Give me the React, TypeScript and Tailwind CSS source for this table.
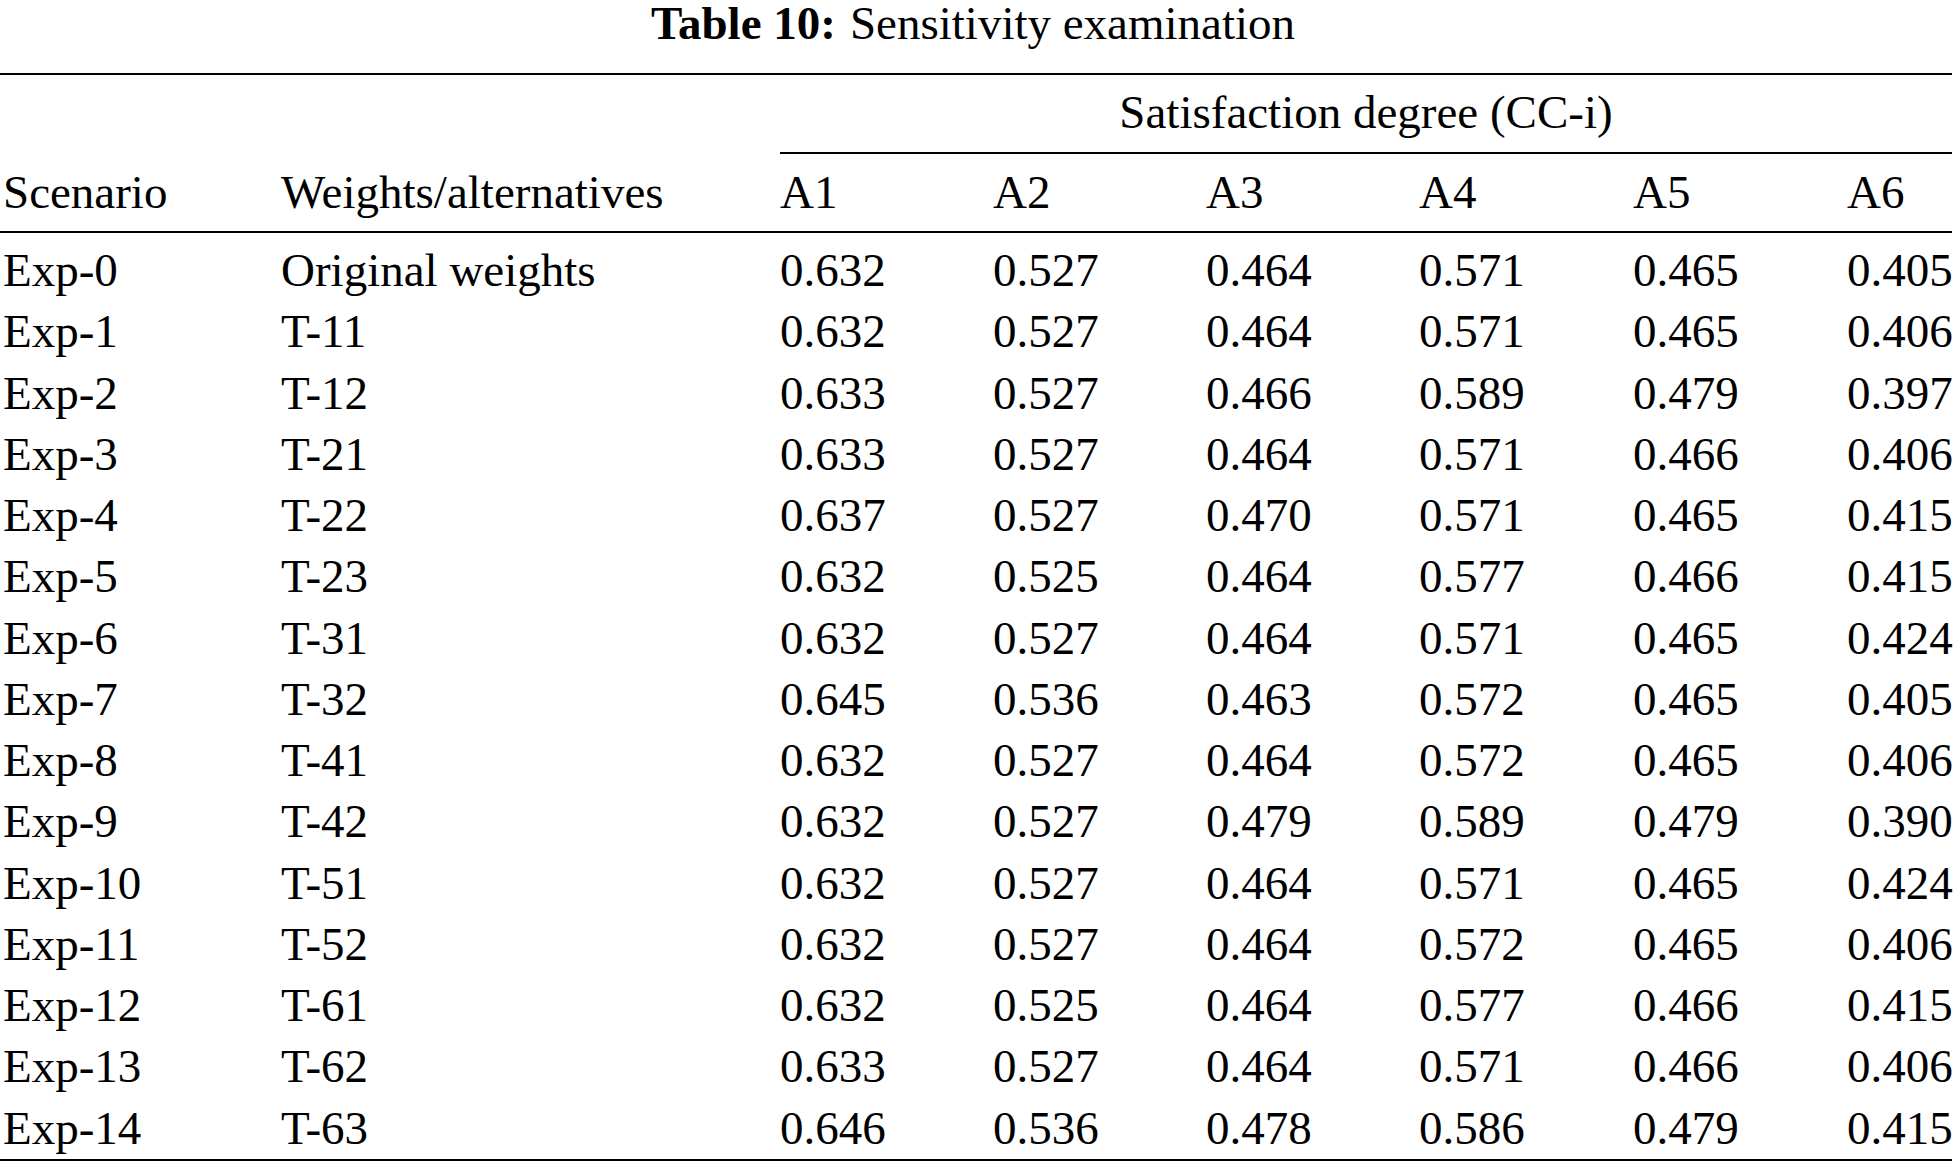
const rows: [string, string, string[]][] = [
  ['Exp-0', 'Original weights', ['0.632', '0.527', '0.464', '0.571', '0.465', '0.405']],
  ['Exp-1', 'T-11', ['0.632', '0.527', '0.464', '0.571', '0.465', '0.406']],
  ['Exp-2', 'T-12', ['0.633', '0.527', '0.466', '0.589', '0.479', '0.397']],
  ['Exp-3', 'T-21', ['0.633', '0.527', '0.464', '0.571', '0.466', '0.406']],
  ['Exp-4', 'T-22', ['0.637', '0.527', '0.470', '0.571', '0.465', '0.415']],
  ['Exp-5', 'T-23', ['0.632', '0.525', '0.464', '0.577', '0.466', '0.415']],
  ['Exp-6', 'T-31', ['0.632', '0.527', '0.464', '0.571', '0.465', '0.424']],
  ['Exp-7', 'T-32', ['0.645', '0.536', '0.463', '0.572', '0.465', '0.405']],
  ['Exp-8', 'T-41', ['0.632', '0.527', '0.464', '0.572', '0.465', '0.406']],
  ['Exp-9', 'T-42', ['0.632', '0.527', '0.479', '0.589', '0.479', '0.390']],
  ['Exp-10', 'T-51', ['0.632', '0.527', '0.464', '0.571', '0.465', '0.424']],
  ['Exp-11', 'T-52', ['0.632', '0.527', '0.464', '0.572', '0.465', '0.406']],
  ['Exp-12', 'T-61', ['0.632', '0.525', '0.464', '0.577', '0.466', '0.415']],
  ['Exp-13', 'T-62', ['0.633', '0.527', '0.464', '0.571', '0.466', '0.406']],
  ['Exp-14', 'T-63', ['0.646', '0.536', '0.478', '0.586', '0.479', '0.415']],
];

const cols = 'grid grid-cols-[281px_499px_213px_213px_213px_214px_214px_105px]';

export default function App() {
  return (
    <div className="w-[1954px] min-h-[1167px] bg-white text-black font-['Liberation_Serif','Times_New_Roman',serif] text-[47px] leading-none">
      <div className="w-[1952px]">
        <div className="h-[73px]">
          <h1 className="text-center leading-[47px] font-normal pr-[6px]">
            <span className="font-bold">Table 10:</span>
            <span className="ml-[14px]">Sensitivity examination</span>
          </h1>
        </div>
        <div className="h-[2px] bg-black" />

        <div className={cols}>
          <div />
          <div />
          <div className="col-span-6 h-[79px] border-b-2 border-black pb-[3px] flex items-center justify-center">
            Satisfaction degree (CC-i)
          </div>
        </div>

        <div className={`${cols} h-[77px] items-center`}>
          <div className="pl-[3px]">Scenario</div>
          <div>Weights/alternatives</div>
          <div>A1</div>
          <div>A2</div>
          <div>A3</div>
          <div>A4</div>
          <div>A5</div>
          <div>A6</div>
        </div>
        <div className="h-[2px] bg-black" />

        <div className="pt-[7px]">
          {rows.map(([name, weight, values]) => (
            <div key={name} className={`${cols} h-[61.25px] items-center`}>
              <div className="pl-[3px]">{name}</div>
              <div>{weight}</div>
              {values.map((v, i) => (
                <div key={i}>{v}</div>
              ))}
            </div>
          ))}
        </div>
        <div className="h-[2px] bg-black" />
      </div>
    </div>
  );
}
